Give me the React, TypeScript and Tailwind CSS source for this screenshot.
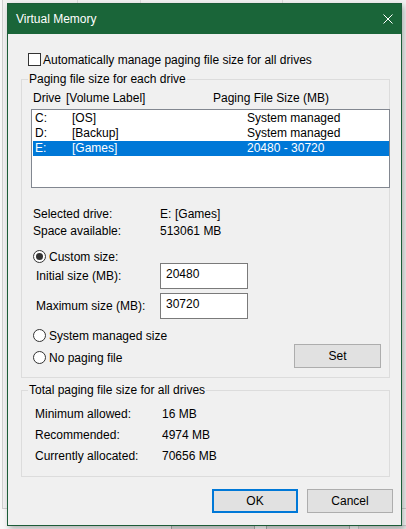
import React from "react";

function Radio({ checked }: { checked?: boolean }) {
  return (
    <span className="flex h-[13px] w-[13px] shrink-0 items-center justify-center rounded-full border border-[#333333] bg-white">
      {checked && <span className="h-[7px] w-[7px] rounded-full bg-[#333333]" />}
    </span>
  );
}

export default function App() {
  const rows = [
    { d: "C:", l: "[OS]", s: "System managed", sel: false },
    { d: "D:", l: "[Backup]", s: "System managed", sel: false },
    { d: "E:", l: "[Games]", s: "20480 - 30720", sel: true },
  ];
  return (
    <div
      className="relative h-[529px] w-[406px] overflow-hidden bg-[#f7f7f7] text-[12px] text-black"
      style={{ fontFamily: '"Liberation Sans", Arial, sans-serif' }}
    >
      {/* window behind */}
      <div className="absolute left-[2px] top-[-2px] h-[511px] w-[420px] border border-[#cfcfcf] bg-[#f0f0f0]" />
      <div className="absolute left-[77px] top-0 h-[4px] w-px bg-[#dadada]" />
      <div className="absolute left-[140px] top-0 h-[4px] w-px bg-[#dadada]" />
      <div className="absolute left-[282px] top-0 h-[4px] w-px bg-[#dadada]" />
      <div className="absolute left-[171px] top-[525px] flex h-[22px] w-[84px] justify-center border border-[#adadad] bg-[#e1e1e1] leading-[22px]">Ok</div>
      <div className="absolute left-[266px] top-[525px] flex h-[22px] w-[84px] justify-center border border-[#adadad] bg-[#e1e1e1] leading-[22px]">Cancel</div>
      <div className="absolute left-[358px] top-[525px] flex h-[22px] w-[84px] justify-center border border-[#cccccc] bg-[#e5e5e5] leading-[22px] text-[#a0a0a0]">Apply</div>

      <div className="relative pl-[7px] pt-[3px]">
        <div className="flex h-[523px] w-[395px] flex-col border border-[#1c5c38] bg-[#f0f0f0] shadow-[2px_3px_6px_rgba(0,0,0,0.28)]">
          {/* title bar */}
          <div className="flex h-[30px] shrink-0 items-center justify-between bg-[#1a6539] pl-[8px] pr-[8px] text-white">
            <span className="leading-[16px]">Virtual Memory</span>
            <svg width="10" height="10" viewBox="0 0 10 10" className="mr-[0px]">
              <path d="M0.5 0.5 L9.5 9.5 M9.5 0.5 L0.5 9.5" stroke="white" strokeWidth="1" />
            </svg>
          </div>

          {/* body */}
          <div className="flex flex-col">
            <div className="mt-[19px] flex h-[13px] items-center pl-[20px]">
              <span className="h-[13px] w-[13px] border border-[#333333] bg-white" />
              <span className="ml-[2px] leading-[16px]">Automatically manage paging file size for all drives</span>
            </div>

            {/* group 1 */}
            <div className="relative ml-[13px] mt-[13px] flex h-[299px] w-[369px] flex-col border border-[#dcdcdc]">
              <span className="absolute left-[6px] top-[-9px] bg-[#f0f0f0] px-[1px] leading-[16px]">Paging file size for each drive</span>
              <div className="mt-[10px] flex h-[16px] pl-[11px] leading-[16px]">
                <span className="w-[33px]">Drive</span>
                <span className="w-[147px]">[Volume Label]</span>
                <span>Paging File Size (MB)</span>
              </div>
              <div className="ml-[9px] mt-[3px] h-[79px] w-[359px] shrink-0 border border-[#828790] bg-white pl-[1px] pt-[1px]">
                {rows.map((r) => (
                  <div
                    key={r.d}
                    className={
                      "flex h-[15px] pl-[2px] leading-[15px] " +
                      (r.sel ? "bg-[#0078d7] text-white" : "")
                    }
                  >
                    <span className="w-[37px]">{r.d}</span>
                    <span className="w-[175px]">{r.l}</span>
                    <span>{r.s}</span>
                  </div>
                ))}
              </div>

              <div className="mt-[18px] flex flex-col pl-[11px]">
                <div className="flex h-[17px] leading-[17px]">
                  <span className="w-[127px]">Selected drive:</span>
                  <span className="w-[15px]">E:</span>
                  <span>[Games]</span>
                </div>
                <div className="flex h-[17px] leading-[17px]">
                  <span className="w-[127px]">Space available:</span>
                  <span>513061 MB</span>
                </div>
              </div>

              <div className="mt-[10px] flex h-[13px] items-center pl-[11px]">
                <Radio checked />
                <span className="ml-[3px] leading-[16px]">Custom size:</span>
              </div>

              <div className="flex h-[26px] items-center">
                <span className="w-[138px] pl-[14px] leading-[16px]">Initial size (MB):</span>
                <div className="h-[26px] w-[88px] border border-[#7a7a7a] bg-white pl-[5px] pt-[2px] leading-[16px]">20480</div>
              </div>
              <div className="mt-[4px] flex h-[26px] items-center">
                <span className="w-[138px] pl-[14px] leading-[16px]">Maximum size (MB):</span>
                <div className="h-[26px] w-[88px] border border-[#7a7a7a] bg-white pl-[5px] pt-[2px] leading-[16px]">30720</div>
              </div>

              <div className="mt-[10px] flex justify-between pr-[8px]">
                <div className="flex flex-col gap-[9px] pl-[11px]">
                  <div className="flex h-[13px] items-center">
                    <Radio />
                    <span className="ml-[3px] leading-[16px]">System managed size</span>
                  </div>
                  <div className="flex h-[13px] items-center">
                    <Radio />
                    <span className="ml-[3px] leading-[16px]">No paging file</span>
                  </div>
                </div>
                <div className="mt-[15px] flex h-[24px] w-[87px] items-center justify-center border border-[#adadad] bg-[#e1e1e1] leading-[16px]">
                  Set
                </div>
              </div>
            </div>

            {/* group 2 */}
            <div className="relative ml-[13px] mt-[12px] flex h-[87px] w-[369px] flex-col border border-[#dcdcdc]">
              <span className="absolute left-[6px] top-[-9px] bg-[#f0f0f0] px-[1px] leading-[16px]">Total paging file size for all drives</span>
              <div className="mt-[12px] flex flex-col pl-[13px]">
                <div className="flex h-[21px] items-center leading-[16px]">
                  <span className="w-[127px]">Minimum allowed:</span>
                  <span>16 MB</span>
                </div>
                <div className="flex h-[21px] items-center leading-[16px]">
                  <span className="w-[127px]">Recommended:</span>
                  <span>4974 MB</span>
                </div>
                <div className="flex h-[21px] items-center leading-[16px]">
                  <span className="w-[127px]">Currently allocated:</span>
                  <span>70656 MB</span>
                </div>
              </div>
            </div>

            {/* buttons */}
            <div className="mt-[12px] flex justify-end gap-[9px] pr-[8px]">
              <div className="flex h-[24px] w-[86px] items-center justify-center border-2 border-[#0078d7] bg-[#e1e1e1] leading-[16px]">OK</div>
              <div className="flex h-[24px] w-[86px] items-center justify-center border border-[#adadad] bg-[#e1e1e1] leading-[16px]">Cancel</div>
            </div>
          </div>
        </div>
      </div>
    </div>
  );
}
